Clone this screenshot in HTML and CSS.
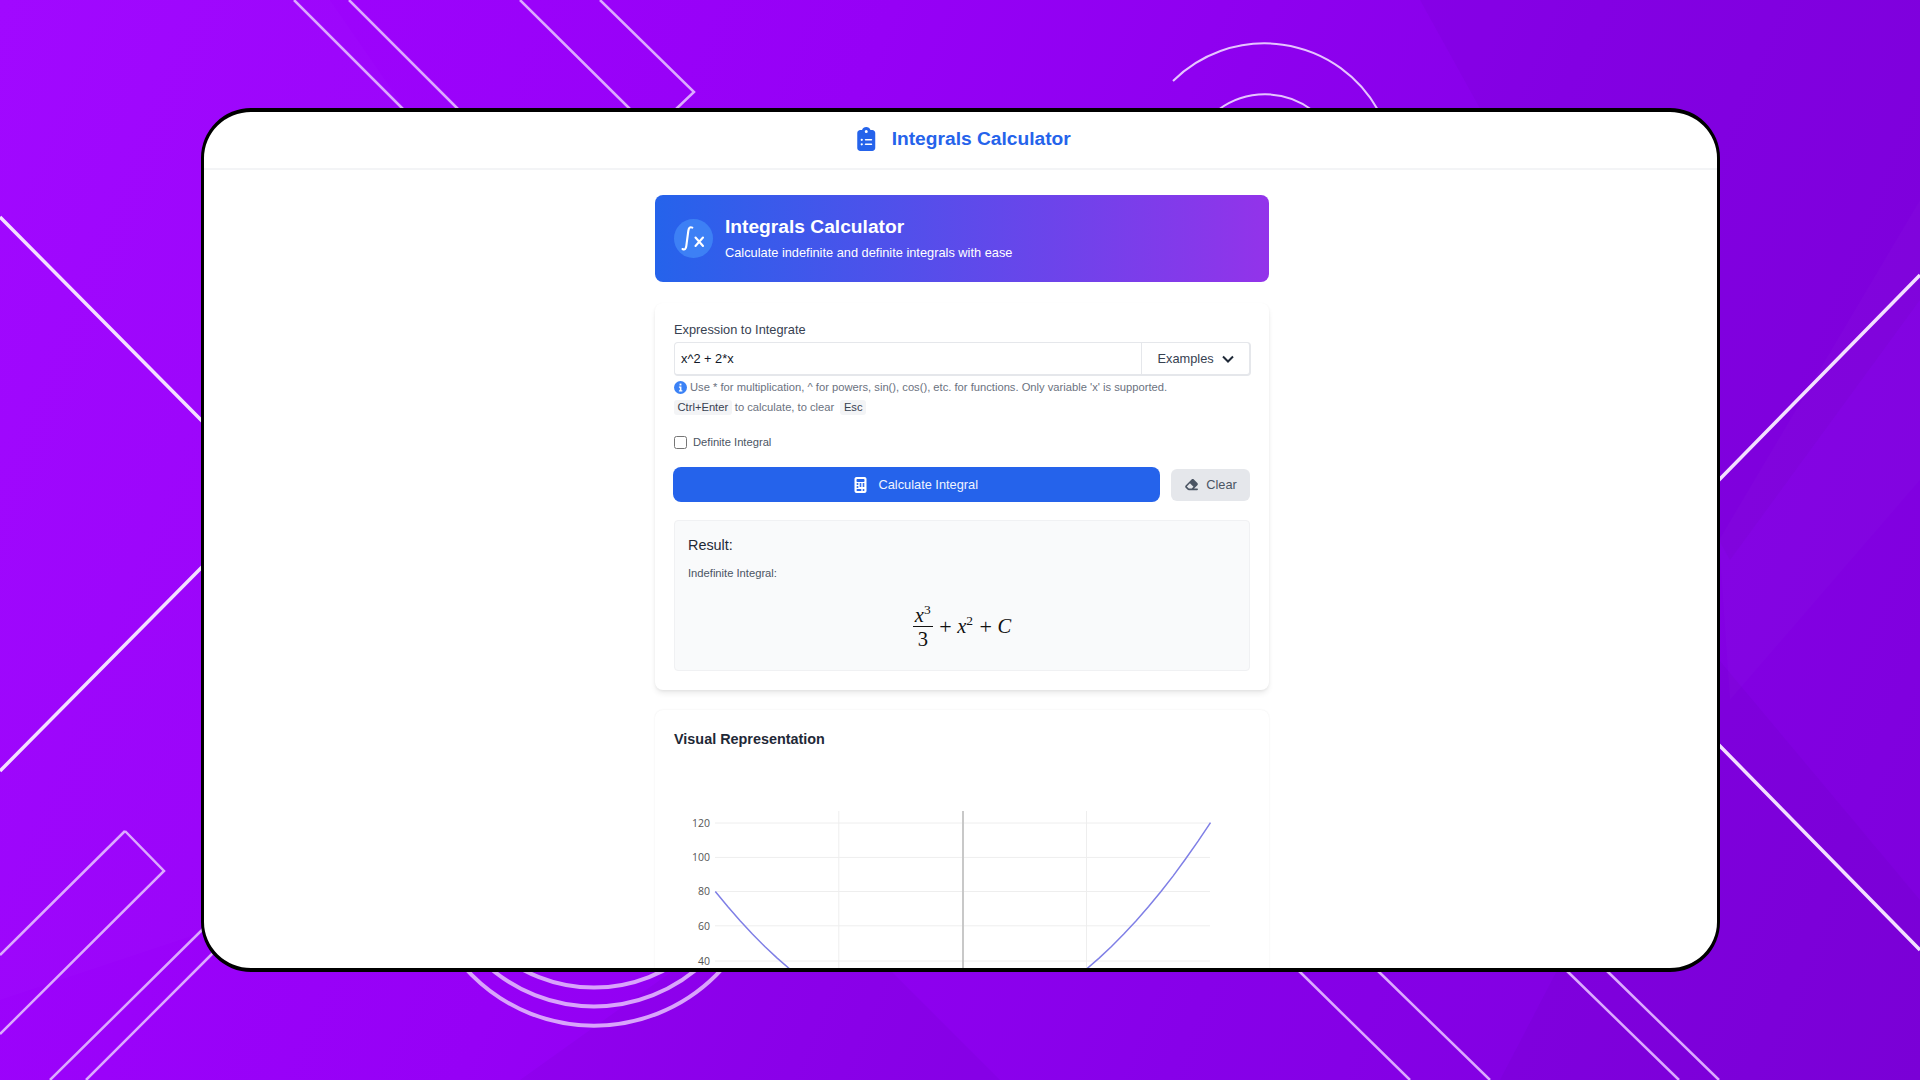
FILE: index.html
```html
<!DOCTYPE html>
<html lang="en">
<head>
<meta charset="utf-8">
<title>Integrals Calculator</title>
<link rel="stylesheet" href="styles.css">
</head>
<body>
<div class="stage">
  <svg class="backdrop" viewBox="0 0 1920 1080" fill="none" aria-hidden="true">
    <polygon class="shade-light" points="0,0 330,0 620,420 300,900 0,1000"/>
    <polygon class="shade-dark" points="520,1080 800,880 1000,1080"/>
    <polygon class="shade-dark" points="1420,0 1920,0 1920,300 1730,560"/>
    <polygon class="shade-dark" points="1719,660 1920,900 1920,1080 1500,1080"/>
    <polygon class="shade-light" points="1719,540 1920,200 1920,480 1730,700"/>
    <g class="line-thin">
      <path d="M294 0L404 110M349 0L459 110M520 0L631 110"/>
      <path d="M600 0L694 92L675 110"/>
      <path d="M125 831L0 955M125 831L164 871L0 1034"/>
      <path d="M203 929L50 1080M213 953L86 1080"/>
      <path d="M1298 970L1410 1080M1377 970L1490 1080M1566 970L1679 1080M1606 970L1719 1080"/>
    </g>
    <g class="line-bright">
      <path d="M0 217L205 424M0 771L205 564"/>
      <path d="M1920 275L1717 482M1717 743L1920 950"/>
    </g>
    <g class="line-arc">
      <path d="M1173 81A130 130 0 0 1 1378 110"/>
      <path d="M1218 110A78 78 0 0 1 1312 110"/>
    </g>
    <g class="line-ring">
      <circle cx="594" cy="853" r="172.7"/>
      <circle cx="594" cy="846" r="160.4"/>
      <circle cx="594" cy="838" r="149.6"/>
    </g>
  </svg>

  <div class="frame">
    <header class="topbar">
      <svg class="topbar-icon" viewBox="0 0 384 512" aria-hidden="true"><path d="M192 0c-41.8 0-77.4 26.7-90.5 64H64C28.7 64 0 92.7 0 128V448c0 35.3 28.7 64 64 64H320c35.3 0 64-28.7 64-64V128c0-35.3-28.7-64-64-64H282.5C269.4 26.7 233.8 0 192 0zm0 64a32 32 0 1 1 0 64 32 32 0 1 1 0-64zM72 272a24 24 0 1 1 48 0 24 24 0 1 1 -48 0zm104-16H304c8.8 0 16 7.2 16 16s-7.2 16-16 16H176c-8.8 0-16-7.2-16-16s7.2-16 16-16zM72 368a24 24 0 1 1 48 0 24 24 0 1 1 -48 0zm88 0c0-8.8 7.2-16 16-16H304c8.8 0 16 7.2 16 16s-7.2 16-16 16H176c-8.8 0-16-7.2-16-16z"/></svg>
      <span class="topbar-title">Integrals Calculator</span>
    </header>

    <main class="content">
      <section class="hero">
        <svg class="hero-icon" viewBox="0 0 39 39" fill="none" aria-hidden="true">
          <circle cx="19.5" cy="19.5" r="19.5"/>
          <path d="M8.5 30c2.4 1.200 3.400-.2 3.800-3l2-15c.4-3 1.600-4.600 4-3.400"/>
          <path d="M21.500 18.500l7.500 8.500M29 18.500l-7.500 8.500"/>
        </svg>
        <div class="hero-text">
          <h1 class="hero-title">Integrals Calculator</h1>
          <p class="hero-sub">Calculate indefinite and definite integrals with ease</p>
        </div>
      </section>

      <section class="card card-form">
        <label class="field-label">Expression to Integrate</label>
        <div class="input-group">
          <span class="input-value">x^2 + 2*x</span>
          <span class="input-addon">Examples
            <svg class="chevron" viewBox="0 0 12 8" fill="none" aria-hidden="true"><path d="M1 1.500l5 5 5-5"/></svg>
          </span>
        </div>
        <p class="hint">
          <svg class="hint-icon" viewBox="0 0 14 14" aria-hidden="true"><circle cx="7" cy="7" r="7"/><rect class="hint-i" x="6" y="2.800" width="2" height="2"/><path class="hint-i" d="M5.300 6h2.700v4h1v1.200H5.300V10h1V7.200h-1z"/></svg>
          Use * for multiplication, ^ for powers, sin(), cos(), etc. for functions. Only variable 'x' is supported.
        </p>
        <p class="shortcuts"><kbd>Ctrl+Enter</kbd> to calculate, to clear <kbd>Esc</kbd></p>
        <label class="check-row"><span class="check-box"></span>Definite Integral</label>
        <div class="actions">
          <button class="btn-primary" type="button">
            <svg class="btn-icon" viewBox="0 0 384 512" aria-hidden="true"><path d="M64 0C28.7 0 0 28.7 0 64V448c0 35.3 28.7 64 64 64H320c35.3 0 64-28.7 64-64V64c0-35.3-28.7-64-64-64H64zM96 64H288c17.7 0 32 14.3 32 32v32c0 17.7-14.3 32-32 32H96c-17.7 0-32-14.3-32-32V96c0-17.7 14.3-32 32-32zm32 160a32 32 0 1 1 -64 0 32 32 0 1 1 64 0zM96 352a32 32 0 1 1 0-64 32 32 0 1 1 0 64zM64 416c0-17.7 14.3-32 32-32h96c17.700 0 32 14.300 32 32s-14.300 32-32 32H96c-17.700 0-32-14.300-32-32zM192 256a32 32 0 1 1 0-64 32 32 0 1 1 0 64zm32 32a32 32 0 1 1 -64 0 32 32 0 1 1 64 0zm64-32a32 32 0 1 1 0-64 32 32 0 1 1 0 64zm32 32a32 32 0 1 1 -64 0 32 32 0 1 1 64 0zM288 448a32 32 0 1 1 0-64 32 32 0 1 1 0 64z"/></svg>
            Calculate Integral
          </button>
          <button class="btn-secondary" type="button">
            <svg class="eraser" viewBox="0 0 576 512" aria-hidden="true"><path d="M290.700 57.400L57.400 290.700c-25 25-25 65.500 0 90.500l80 80c12 12 28.300 18.700 45.300 18.700H288h9.400H512c17.700 0 32-14.300 32-32s-14.300-32-32-32H387.900L518.600 285.300c25-25 25-65.500 0-90.500L381.300 57.400c-25-25-65.500-25-90.500 0zM297.400 416H288l-105.400 0-80-80L227.300 211.300 364.700 348.700 297.400 416z"/></svg>
            Clear
          </button>
        </div>
        <div class="result">
          <h3 class="result-title">Result:</h3>
          <p class="result-kind">Indefinite Integral:</p>
          <div class="math">
            <span class="frac">
              <span class="num"><i>x</i><sup>3</sup></span>
              <span class="den">3</span>
            </span>
            <span class="op">+</span>
            <span class="term"><i>x</i><sup>2</sup></span>
            <span class="op">+</span>
            <i class="term">C</i>
          </div>
        </div>
      </section>

      <section class="card card-chart">
        <h2 class="chart-title">Visual Representation</h2>
        <svg class="chart" viewBox="674 790 576 200" aria-label="Plot of the integrand">
          <g class="grid">
            <path d="M715 823H1210M715 857.400H1210M715 891.500H1210M715 925.800H1210M715 961H1210"/>
            <path d="M838.800 811V990M1086.500 811V990"/>
          </g>
          <path class="axis" d="M963 811V990"/>
          <g class="ticks">
            <text x="710" y="826.500">120</text>
            <text x="710" y="861">100</text>
            <text x="710" y="895">80</text>
            <text x="710" y="929.500">60</text>
            <text x="710" y="964.500">40</text>
          </g>
          <path class="curve" d="M715.300 891.500L727.700 906.500 740.100 920.700 752.400 934.100 764.800 946.500 777.200 958.100 789.600 968.900 802 978.800"/>
          <path class="curve" d="M1074.300 978.800L1086.700 968.900 1099.100 958.100 1111.500 946.500 1123.800 934.100 1136.200 920.700 1148.600 906.500 1161 891.500 1173.400 875.600 1185.700 858.800 1198.100 841.200 1210.500 822.700"/>
        </svg>
      </section>
    </main>
  </div>
</div>
</body>
</html>
```

FILE: styles.css
```css
* { box-sizing: border-box; }
html, body { margin: 0; padding: 0; }
body { font-family: "Liberation Sans", Arial, sans-serif; color: #1f2937; }

.stage {
  position: relative;
  width: 1920px;
  height: 1080px;
  overflow: hidden;
  padding: 108px 0 0 201px;
  background: linear-gradient(112deg, #a005ff 0%, #9600f6 38%, #8700e9 68%, #7e00dc 100%);
}
.backdrop { position: absolute; inset: 0; width: 1920px; height: 1080px; }
.shade-light { fill: #ffffff; opacity: .015; }
.shade-dark { fill: #40007a; opacity: .05; }
.line-thin path { stroke: #dcaaff; stroke-width: 2.5; }
.line-bright path { stroke: #f3e0ff; stroke-width: 3.5; }
.line-arc path { stroke: #e6c4ff; stroke-width: 2; }
.line-ring circle { stroke: #d9a4fb; stroke-width: 4; }

.frame {
  position: relative;
  width: 1519px;
  height: 864px;
  background: #fff;
  border: solid #000;
  border-width: 4px 3px;
  border-radius: 50px;
  overflow: hidden;
}

.topbar {
  display: flex;
  align-items: center;
  justify-content: center;
  gap: 16px;
  height: 58px;
  padding: 0 0 3px 7px;
  border-bottom: 2px solid #f3f4f6;
}
.topbar-icon { width: 18.500px; height: 24px; fill: #2563eb; }
.topbar-title { font-size: 19.200px; font-weight: 700; color: #2563eb; }

.content {
  width: 614px;
  margin-left: 451px;
  padding-top: 25px;
  display: flex;
  flex-direction: column;
  gap: 20px;
}

.hero {
  display: flex;
  align-items: center;
  gap: 12px;
  height: 87px;
  margin-bottom: 1px;
  padding: 0 0 1px 19px;
  border-radius: 8px;
  background: linear-gradient(90deg, #2563eb, #9333ea);
  color: #fff;
}
.hero-icon { width: 39px; height: 39px; flex: none; }
.hero-icon circle { fill: #3d80f5; }
.hero-icon path { stroke: #fff; stroke-width: 2.100; stroke-linecap: round; }
.hero-title { margin: 0 0 6px; font-size: 19.200px; line-height: 24px; font-weight: 700; }
.hero-sub { margin: 0; font-size: 12.800px; line-height: 16px; }

.card {
  background: #fff;
  border-radius: 8px;
  padding: 18px 19px 19px;
  box-shadow: 0 4px 6px -1px rgba(0,0,0,.09), 0 1px 3px rgba(0,0,0,.05);
}
.card-form { height: 387px; }

.field-label { display: block; font-size: 12.800px; line-height: 18px; color: #374151; margin-bottom: 3px; }

.input-group {
  display: flex;
  height: 34px;
  margin-right: -0.500px;
  border: 2px solid #e5e7eb;
  border-width: 1.500px 2px 2px 1.500px;
  border-radius: 4px;
  font-size: 12.800px;
}
.input-value { flex: 1; padding-left: 6px; line-height: 32px; color: #111827; }
.input-addon {
  display: flex;
  align-items: center;
  gap: 8px;
  width: 108px;
  padding-left: 16px;
  border-left: 1.500px solid #e5e7eb;
  color: #374151;
}
.chevron { width: 12px; height: 8px; stroke: #1f2937; stroke-width: 2; }

.hint { margin: 4px 0 0; display: flex; align-items: center; gap: 3px; font-size: 11.200px; line-height: 14px; color: #6b7280; white-space: nowrap; }
.hint-icon { width: 13px; height: 13px; fill: #3b82f6; flex: none; }
.hint-i { fill: #fff; }

.shortcuts { margin: 6px 0 0; height: 15px; font-size: 11.200px; line-height: 15px; color: #6b7280; white-space: nowrap; }
kbd {
  display: inline-block;
  padding: 0 3.500px;
  border-radius: 3px;
  background: #f3f4f6;
  font: inherit;
  color: #374151;
}
kbd:last-child { margin-left: 3px; }

.check-row { display: flex; align-items: center; gap: 6px; margin-top: 21px; height: 12px; font-size: 11.200px; color: #4b5563; }
.check-box { width: 13px; height: 13px; border: 1.500px solid #767676; border-radius: 2.500px; background: #fff; flex: none; }

.actions { display: flex; align-items: center; gap: 11px; margin: 19px 0 0 -1.500px; height: 35px; }
.btn-primary {
  flex: 1;
  height: 35px;
  display: flex;
  align-items: center;
  justify-content: center;
  gap: 11px;
  border: 0;
  border-radius: 8px;
  background: #2563eb;
  color: #f0f4ff;
  font: 12.800px "Liberation Sans", Arial, sans-serif;
}
.btn-icon { width: 13px; height: 16px; fill: #fff; }
.btn-secondary {
  width: 79px;
  height: 32px;
  display: flex;
  align-items: center;
  justify-content: center;
  gap: 7px;
  border: 0;
  border-radius: 6px;
  background: #e5e7eb;
  color: #4b5563;
  font: 12.800px "Liberation Sans", Arial, sans-serif;
}
.eraser { width: 15px; height: 13px; fill: #4b5563; }

.result {
  margin-top: 18px;
  padding: 14px 13px 19px;
  border: 1px solid #f0f1f3;
  border-radius: 4px;
  background: #f9fafb;
}
.result-title { margin: 0; font-size: 14.400px; line-height: 20px; font-weight: 400; color: #1f2937; }
.result-kind { margin: 10px 0 0; font-size: 11.200px; line-height: 16px; color: #4b5563; }

.math {
  display: flex;
  align-items: center;
  justify-content: center;
  margin-top: 19px;
  height: 51px;
  font: 20.500px "Liberation Serif", "Times New Roman", serif;
  color: #111;
  padding-top: 2px;
}
.frac { display: flex; flex-direction: column; align-items: center; width: 20px; margin-top: -2px; }
.num { height: 26px; line-height: 30px; border-bottom: 1px solid #111; width: 100%; text-align: center; box-sizing: content-box; white-space: nowrap; }
.den { height: 24px; line-height: 25px; }
sup { font-size: 13.500px; line-height: 0; vertical-align: 8px; }
.op { margin: 0 5.500px 0 6.500px; font-size: 22px; }
.term { white-space: nowrap; }

.card-chart { padding-top: 19px; box-shadow: 0 0 2px rgba(0,0,0,.08); }
.chart-title { margin: 0; font-size: 14.400px; line-height: 20px; font-weight: 700; color: #1f2937; }
.chart { display: block; width: 576px; height: 200px; margin-top: 41px; }
.grid path { stroke: #eeeeee; stroke-width: 1; fill: none; }
.axis { stroke: #c8c8c8; stroke-width: 2; fill: none; }
.curve { stroke: #7f7fe6; stroke-width: 1.500; fill: none; }
.ticks text { font: 10.500px "Open Sans", sans-serif; fill: #555; text-anchor: end; }
```
